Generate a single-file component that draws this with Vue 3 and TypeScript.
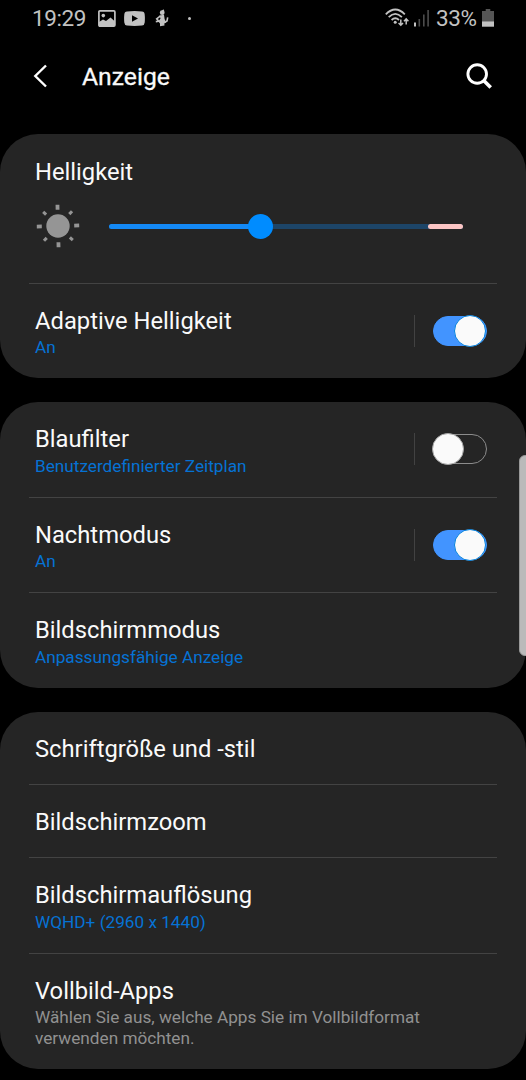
<script setup lang="ts">
import { ref } from 'vue'

interface Setting {
  title: string
  detail?: string
  muted?: boolean
  on?: boolean
}

const level = ref(42.8)

const groups = ref<Setting[][]>([
  [{ title: 'Adaptive Helligkeit', detail: 'An', on: true }],
  [
    { title: 'Blaufilter', detail: 'Benutzerdefinierter Zeitplan', on: false },
    { title: 'Nachtmodus', detail: 'An', on: true },
    { title: 'Bildschirmmodus', detail: 'Anpassungsfähige Anzeige' },
  ],
  [
    { title: 'Schriftgröße und -stil' },
    { title: 'Bildschirmzoom' },
    { title: 'Bildschirmauflösung', detail: 'WQHD+ (2960 x 1440)' },
    {
      title: 'Vollbild-Apps',
      detail: 'Wählen Sie aus, welche Apps Sie im Vollbildformat verwenden möchten.',
      muted: true,
    },
  ],
])

const rays = [0, 45, 90, 135, 180, 225, 270, 315]

function toggle(item: Setting) {
  item.on = !item.on
}
</script>

<template>
  <div class="screen">
    <header class="status">
      <span class="clock">19:29</span>
      <svg class="s-image" width="18" height="17" viewBox="0 0 18 17">
        <rect x=".9" y=".9" width="16" height="15.200" rx="1" fill="none" stroke="#c2c2c2" stroke-width="1.700" />
        <circle cx="5.300" cy="5.600" r="1.800" fill="#c2c2c2" />
        <path d="M1 12L5 9.500L8 11L12.500 7.500L17 11.500V16H1z" fill="#c2c2c2" />
      </svg>
      <svg class="s-video" width="21" height="15" viewBox="0 0 21 15">
        <path fill="#c2c2c2" fill-rule="evenodd" d="M3 .5Q10.500-.3 18 .5Q20.500.7 20.700 3.500Q21.100 7.500 20.700 11.500Q20.500 14.300 18 14.500Q10.500 15.300 3 14.500Q.5 14.300.3 11.500Q-.1 7.500.3 3.500Q.5.7 3 .5zM8 4.200V10.800L14 7.500z" />
      </svg>
      <svg class="s-figure" width="14" height="18" viewBox="0 0 14 18">
        <circle cx="7.200" cy="3.700" r="2.400" fill="#c2c2c2" />
        <path d="M6.500 2L8.500 .3L9.500 2.500z" fill="#c2c2c2" />
        <path d="M4.500 6.500L9 5.800L9.600 10L11 13.500L9.300 14.500L9.500 16.500L5 17.300L5 14.500L3.300 12.500L5.500 9.500z" fill="#c2c2c2" />
        <path d="M5.500 6.800L1.700 9.800L3.700 12.200L.8 12.600M9.500 13.500L12 12L12.700 8.300" fill="none" stroke="#c2c2c2" stroke-width="1.600" />
      </svg>
      <i class="dot"></i>
      <span class="grow"></span>
      <svg class="s-wifi" width="25" height="20" viewBox="0 0 25 20">
        <g fill="none" stroke="#c2c2c2" stroke-width="1.800">
          <path d="M.8 6.300Q10.300-3.300 19.800 6.300" />
          <path d="M3.700 9.200Q10.300 2.600 16.900 9.200" />
          <path d="M6.600 12Q10.300 8.500 14 12" />
        </g>
        <circle cx="10.200" cy="14.200" r="1.500" fill="#c2c2c2" />
        <path d="M15.800 11.500V17M13.600 14.900L15.800 17.200L18 14.900M21.200 16.500V11M19 13.200L21.200 10.900L23.400 13.200" fill="none" stroke="#c2c2c2" stroke-width="1.500" />
      </svg>
      <svg class="s-signal" width="16" height="17" viewBox="0 0 16 17">
        <rect x="0" y="12.500" width="2" height="4" fill="#c2c2c2" />
        <rect x="4.500" y="9" width="1.600" height="7.500" fill="#4c4c4c" />
        <rect x="9" y="4.500" width="1.600" height="12" fill="#4c4c4c" />
        <rect x="13.300" y="0" width="1.600" height="16.500" fill="#4c4c4c" />
      </svg>
      <span class="percent">33%</span>
      <svg class="s-battery" width="12" height="18" viewBox="0 0 12 18">
        <path d="M0 2H3.700V0H8.300V2H12V12.300H0z" fill="#555" />
        <rect y="12.300" width="12" height="5.400" fill="#c2c2c2" />
      </svg>
    </header>

    <nav class="bar">
      <svg class="back" width="16" height="24" viewBox="0 0 16 24">
        <path d="M13 1.500L2.300 12L13 22.500" fill="none" stroke="#fff" stroke-width="2.400" />
      </svg>
      <h1>Anzeige</h1>
      <svg class="search" width="26" height="26" viewBox="0 0 26 26">
        <circle cx="11.200" cy="11" r="9.300" fill="none" stroke="#fff" stroke-width="2.900" />
        <path d="M17.700 17.500L24.700 24.500" stroke="#fff" stroke-width="3.600" />
      </svg>
    </nav>

    <main class="groups">
      <section v-for="(group, g) in groups" :key="g" class="card">
        <div v-if="g === 0" class="row brightness">
          <div class="title">Helligkeit</div>
          <div class="slider">
            <svg class="sun" width="44" height="44" viewBox="-22 -22 44 44">
              <circle r="11.700" fill="#959595" />
              <rect
                v-for="a in rays"
                :key="a"
                :x="a % 90 ? -1.5 : -1.9"
                :y="a % 90 ? -20.4 : -21.2"
                :width="a % 90 ? 3 : 3.8"
                :height="a % 90 ? 4 : 5"
                fill="#959595"
                :transform="`rotate(${a - 1.5})`"
              />
            </svg>
            <div class="track">
              <span class="warm"></span>
              <span class="fill" :style="{ width: level + '%' }"></span>
              <span class="knob" :style="{ left: level + '%' }"></span>
            </div>
          </div>
        </div>
        <div v-for="item in group" :key="item.title" class="row" :class="{ single: !item.detail, long: item.muted }">
          <div class="text">
            <div class="title">{{ item.title }}</div>
            <div v-if="item.detail" class="detail" :class="{ muted: item.muted }">{{ item.detail }}</div>
          </div>
          <div v-if="item.on !== undefined" class="control">
            <button class="switch" :class="{ on: item.on }" :aria-label="item.title" @click="toggle(item)">
              <span class="thumb"></span>
            </button>
          </div>
        </div>
      </section>
    </main>

    <aside class="edge"></aside>
  </div>
</template>

<style>
body {
  background: #000;
}
</style>

<style scoped>
.screen {
  position: relative;
  box-sizing: border-box;
  width: 526px;
  height: 1080px;
  overflow: hidden;
  background: #000;
  color: #fafafa;
  font-family: Roboto, sans-serif;
}
.status {
  display: flex;
  align-items: center;
  box-sizing: border-box;
  height: 36px;
  padding: 0 32px 0 32px;
  color: #c2c2c2;
  font-size: 22.500px;
  letter-spacing: -0.400px;
}
.clock {
  width: 66px;
}
.s-video {
  margin-left: 8px;
}
.s-figure {
  margin-left: 10px;
}
.dot {
  width: 3px;
  height: 3px;
  margin-left: 19px;
  border-radius: 50%;
  background: #c2c2c2;
}
.grow {
  flex: 1;
}
.s-signal {
  margin-left: 4px;
}
.percent {
  width: 41px;
  margin-left: 6px;
}
.s-battery {
  margin-left: 5px;
}
.bar {
  display: flex;
  align-items: center;
  height: 80px;
  margin-bottom: 18px;
  padding: 0 34px 0 32.500px;
}
h1 {
  flex: 1;
  margin: 2px 0 0 33.500px;
  font-size: 24.700px;
  font-weight: 400;
  line-height: 28px;
  -webkit-text-stroke: 0.300px currentColor;
}
.groups {
  display: flex;
  flex-direction: column;
  gap: 24px;
}
.card {
  padding: 0 29px;
  border-radius: 38px;
  background: #252525;
}
.row {
  display: flex;
  box-sizing: border-box;
  height: 95.500px;
  padding: 23px 6px 0;
  border-bottom: 1px solid #434343;
}
.row.single {
  height: 73.200px;
}
.row:last-child {
  height: 94.800px;
  border-bottom: 0;
}
.row.long:last-child {
  height: 115px;
}
.row.brightness {
  flex-direction: column;
  height: 149.500px;
  padding-top: 24px;
}
.text {
  width: 395px;
}
.title {
  font-size: 23.750px;
  line-height: 28px;
}
.detail {
  margin-top: 2.500px;
  color: #0572d4;
  font-size: 17.200px;
  line-height: 20.500px;
}
.detail.muted {
  color: #919191;
}
.slider {
  display: flex;
  align-items: center;
  margin: 18px 0 0 1px;
}
.track {
  position: relative;
  width: 354px;
  height: 5px;
  margin-left: 29px;
  border-radius: 3px;
  background: #1d4568;
}
.warm,
.fill {
  position: absolute;
  top: 0;
  height: 5px;
  border-radius: 3px;
}
.warm {
  right: 0;
  width: 35px;
  background: #fcc5c4;
}
.fill {
  left: 0;
  background: #1489f5;
}
.knob {
  position: absolute;
  top: -10px;
  width: 25px;
  height: 25px;
  margin-left: -12.500px;
  border-radius: 50%;
  background: #008cff;
}
.control {
  display: flex;
  align-items: center;
  box-sizing: border-box;
  height: 32px;
  margin: 8.200px 0 0 -16px;
  padding-left: 18px;
  border-left: 1px solid #424242;
}
.switch {
  display: flex;
  align-items: center;
  box-sizing: border-box;
  width: 53.500px;
  height: 30px;
  padding: 0;
  border: 1.500px solid #8c8c8c;
  border-radius: 15px;
  background: transparent;
}
.switch.on {
  justify-content: flex-end;
  border-color: #4294ff;
  background: #4294ff;
}
.thumb {
  flex: none;
  box-sizing: border-box;
  width: 32px;
  height: 32px;
  margin: 0 -0.500px 0 -1.700px;
  border: 1px solid #a5a5a5;
  border-radius: 50%;
  background: #fafafa;
}
.on .thumb {
  border-color: #0381de;
}
.edge {
  position: absolute;
  top: 455px;
  right: -8px;
  box-sizing: border-box;
  width: 15px;
  height: 201px;
  border: 1px solid #999;
  border-radius: 6px;
  background: #bababa;
}
</style>
